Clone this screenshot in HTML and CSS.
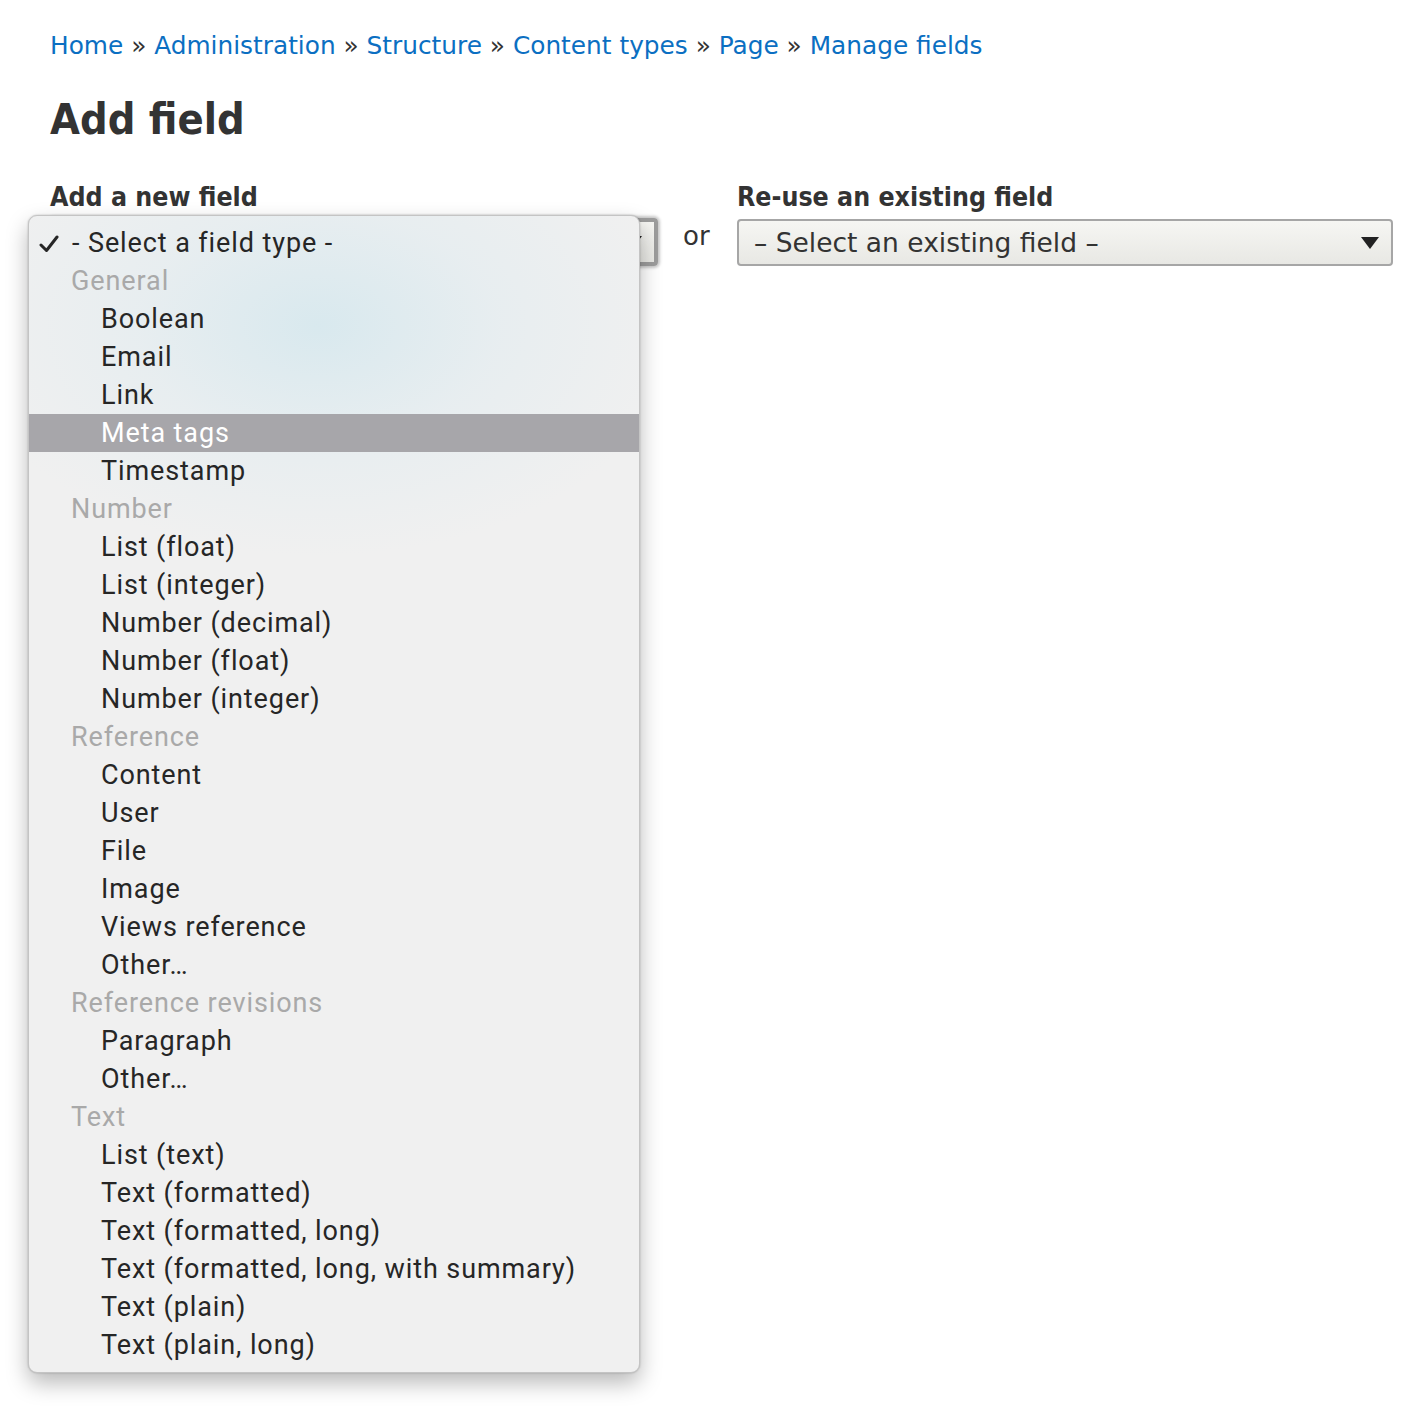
FILE: index.html
```html
<!DOCTYPE html>
<html>
<head>
<meta charset="utf-8">
<link rel="stylesheet" href="styles.css">
</head>
<body>
<nav class="breadcrumb">
  <a href="#">Home</a> <span class="sep">»</span> <a href="#">Administration</a> <span class="sep">»</span> <a href="#">Structure</a> <span class="sep">»</span> <a href="#">Content types</a> <span class="sep">»</span> <a href="#">Page</a> <span class="sep">»</span> <a href="#">Manage fields</a>
</nav>
<h1 class="title">Add field</h1>
<form class="form">
  <div class="col col-new">
    <label class="label">Add a new field</label>
    <div class="select select-new"><span class="select-text covered">- Select a field type -</span><span class="arrow"></span></div>
    <ul class="menu">
      <li class="opt checked"><svg class="check" width="20" height="18" viewBox="0 0 20 18"><path d="M2 10 L7.5 15.5 L18 2" fill="none" stroke="#262626" stroke-width="3" stroke-linecap="round" stroke-linejoin="round"/></svg>- Select a field type -</li>
      <li class="group">General</li>
      <li class="opt">Boolean</li>
      <li class="opt">Email</li>
      <li class="opt">Link</li>
      <li class="opt hl">Meta tags</li>
      <li class="opt">Timestamp</li>
      <li class="group">Number</li>
      <li class="opt">List (float)</li>
      <li class="opt">List (integer)</li>
      <li class="opt">Number (decimal)</li>
      <li class="opt">Number (float)</li>
      <li class="opt">Number (integer)</li>
      <li class="group">Reference</li>
      <li class="opt">Content</li>
      <li class="opt">User</li>
      <li class="opt">File</li>
      <li class="opt">Image</li>
      <li class="opt">Views reference</li>
      <li class="opt">Other…</li>
      <li class="group">Reference revisions</li>
      <li class="opt">Paragraph</li>
      <li class="opt">Other…</li>
      <li class="group">Text</li>
      <li class="opt">List (text)</li>
      <li class="opt">Text (formatted)</li>
      <li class="opt">Text (formatted, long)</li>
      <li class="opt">Text (formatted, long, with summary)</li>
      <li class="opt">Text (plain)</li>
      <li class="opt">Text (plain, long)</li>
    </ul>
  </div>
  <div class="or">or</div>
  <div class="col col-existing">
    <label class="label">Re-use an existing field</label>
    <div class="select select-existing"><span class="select-text">– Select an existing field –</span><span class="arrow"></span></div>
  </div>
</form>
</body>
</html>
```
FILE: styles.css
```css
html, body {
  margin: 0;
  background: #fff;
}
body {
  padding: 27px 0 0 50px;
  font-family: "DejaVu Sans", sans-serif;
  color: #333;
  min-height: 1414px;
  box-sizing: border-box;
}
.breadcrumb {
  font-size: 24.8px;
  line-height: 38px;
  color: #333;
}
.breadcrumb a {
  color: #0b6fc2;
  text-decoration: none;
}
.breadcrumb .sep {
  color: #333;
}
.title {
  margin: 27px 0 0 0;
  font-family: "DejaVu Sans Condensed", "DejaVu Sans", sans-serif;
  font-size: 43px;
  line-height: 54px;
  font-weight: bold;
  color: #333;
}
.form {
  display: flex;
  margin-top: 35px;
  align-items: flex-start;
}
.col {
  display: flex;
  flex-direction: column;
  flex-shrink: 0;
}
.col-new {
  width: 608px;
  position: relative;
}
.col-existing {
  width: 656px;
}
.label {
  font-family: "DejaVu Sans Condensed", "DejaVu Sans", sans-serif;
  font-weight: bold;
  font-size: 26.5px;
  line-height: 32px;
  color: #333;
}
.or {
  flex-shrink: 0;
  width: 79px;
  box-sizing: border-box;
  padding: 38px 0 0 25px;
  font-size: 26px;
  line-height: 34px;
}
.select {
  margin-top: 5px;
  height: 48px;
  box-sizing: border-box;
  border: 2px solid #a6a6a6;
  border-radius: 4px;
  background: linear-gradient(#f6f6f3, #e8e8e4);
  display: flex;
  align-items: center;
  justify-content: space-between;
  padding: 0 12px 0 15px;
  font-size: 26.5px;
  color: #333;
}
.select-new {
  border: 4px solid #9c9c9c;
  box-shadow: 0 0 3px 2px #c8c8c8;
}
.select-text.covered {
  visibility: hidden;
}
.select-existing {
  margin-top: 6px;
  height: 47px;
}
.arrow {
  width: 0;
  height: 0;
  border-left: 9px solid transparent;
  border-right: 9px solid transparent;
  border-top: 12px solid #222;
}
.menu {
  position: absolute;
  left: -22px;
  top: 34px;
  width: 610px;
  margin: 0;
  padding: 8px 0 8px 0;
  list-style: none;
  border-radius: 9px;
  border: 1px solid #c4c4c4;
  background:
    radial-gradient(ellipse 360px 230px at 290px 110px, rgba(214, 232, 238, 0.9), rgba(226, 236, 240, 0.6) 50%, rgba(240, 240, 240, 0) 100%),
    #f0f0f0;
  box-shadow: 0 10px 22px rgba(0, 0, 0, 0.28), 0 0 2px rgba(0, 0, 0, 0.25);
  font-family: Roboto, "Noto Sans", sans-serif;
  font-size: 27px;
  letter-spacing: 0.9px;
  line-height: 38px;
  color: #262626;
}
.menu li {
  height: 38px;
  white-space: nowrap;
}
.opt {
  padding-left: 72px;
}
.opt.checked {
  padding-left: 10px;
}
.check {
  display: inline-block;
  width: 20px;
  height: 18px;
  margin-right: 13px;
  vertical-align: -1px;
}
.group {
  padding-left: 42px;
  color: #a9a9a9;
}
.opt.hl {
  background: #a7a6aa;
  color: #fff;
}
```
